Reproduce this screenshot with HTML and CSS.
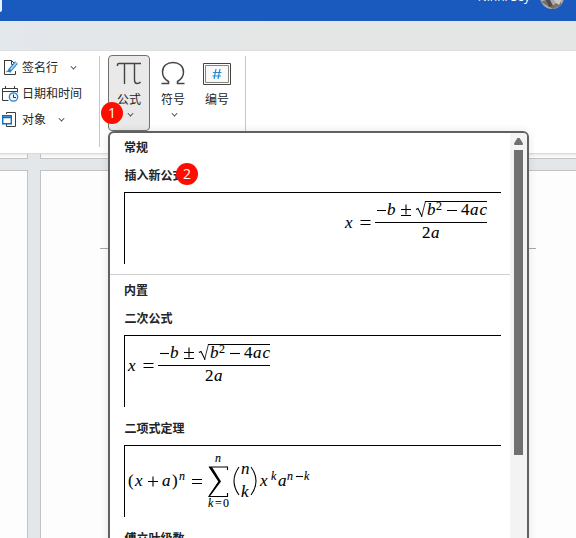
FILE: index.html
```html
<!DOCTYPE html>
<html lang="zh-CN">
<head>
<meta charset="utf-8">
<title>公式</title>
<link rel="stylesheet" href="styles.css">
</head>
<body>
<svg class="defs" width="0" height="0">
  <defs>
    <g id="quadratic">
      <text class="m" x="4" y="37" textLength="9">x</text>
      <path class="ln" d="M19.5 29.5h10M19.5 33.5h10"/>
      <path class="bar" d="M34 31.5h112"/>
      <path class="ln" d="M36 19.5h9"/>
      <text class="m" x="46" y="24">b</text>
      <path class="ln" d="M60 18.5h10M65 13.500v10M60 24.500h10"/>
      <path class="ln" d="M75 18.500l2-1 4 8"/><path class="ln thin" d="M80.500 26l4-16"/><path class="bar" d="M84 10.500h62"/>
      <text class="m" x="86" y="24">b</text>
      <text class="r s" x="95" y="19">2</text>
      <path class="ln" d="M106 19.500h10"/>
      <text class="r" x="120" y="24">4</text>
      <text class="m" x="129" y="24" textLength="17">ac</text>
      <text class="r" x="81" y="47">2</text>
      <text class="m" x="90" y="47">a</text>
    </g>
  </defs>
</svg>
<div class="app">
  <header class="titlebar"><span class="tab-edge"></span><span class="user">Ninni Sey</span>
    <svg class="avatar" width="24" height="24"><circle cx="12" cy="12" r="12" fill="#aaa8a6"/><path d="M1 17l7-3 4 7 8-5 2 4-9 4z" fill="#77706c"/><path d="M5 13l5 2 3 6-4 1z" fill="#4d4b4b"/><path d="M13 13l9 1-3 6-4-3z" fill="#cbc8c5"/></svg>
  </header>
  <div class="tabs"></div>
  <section class="ribbon">
    <div class="small-group">
      <div class="row"><svg width="17" height="17"><path d="M2.500 1.500h7l4 4M9.500 1.500v4h3M2.500 1v14.500h11V12" fill="none" stroke="#3c3c3c"/><path d="M14.500 3.500L8 11l-1 2" stroke="#2085cc" stroke-width="3.600" fill="none"/><path d="M14.500 3.500L8.500 10.500" stroke="#b9dcf5" stroke-width="1.500"/><path d="M4 13q2.500-2 3 0" fill="none" stroke="#2085cc"/></svg><span>签名行</span><i class="chev"></i></div>
      <div class="row"><svg width="17" height="17"><path d="M6.500 15.500H.5V3.500h15v4M.5 6.500h15M3.500 1v3M12.500 1v3" fill="none" stroke="#3c3c3c"/><circle cx="11.500" cy="12" r="4.200" fill="#eef7fd" stroke="#2085cc" stroke-width="1.300"/><path d="M11.500 9.500v3h2.500" fill="none" stroke="#333"/></svg><span>日期和时间</span></div>
      <div class="row"><svg width="17" height="17"><path d="M4.500 3V1.500h9v14h-9V13" fill="none" stroke="#3c3c3c"/><path d="M.7 4.700h8.600v8H.7zM.7 6.500h8.600" fill="#fff" stroke="#0f6cbd" stroke-width="1.400"/></svg><span>对象</span><i class="chev"></i></div>
    </div>
    <div class="big-group">
      <div class="tool active"><svg width="26" height="26"><path d="M1.500 6V4.500q0-1 1.500-1h22M8.500 4v20M18.500 4v16q0 3.500 2.500 3.500 2.500 0 3.500-1.500" fill="none" stroke="#444" stroke-width="1.400"/></svg><span>公式</span><i class="chev"></i></div>
      <div class="tool"><svg width="26" height="26"><path d="M1.500 23.500h7v-2C4 19 2.500 15.500 2.500 12 2.500 6 7 2.500 13 2.500S23.500 6 23.500 12c0 3.500-1.500 7-6 9.500v2h7" fill="none" stroke="#444" stroke-width="1.500"/></svg><span>符号</span><i class="chev"></i></div>
      <div class="tool"><svg width="28" height="26"><path d="M.5 3.500h27v21H.5z" fill="#fff" stroke="#444"/><path d="M2.500 5.500h23v17h-23z" fill="#fafafa" stroke="#85857c"/><path d="M13 9l-2 10M17 9l-2 10M10 12.500h8.500M9.500 16h8.500" stroke="#2788d0" stroke-width="1.200"/></svg><span>编号</span></div>
    </div>
  </section>
  <main class="workspace">
    <div class="col left"><div class="page-end"></div><div class="page"></div></div>
    <div class="col right"><div class="page-end"></div><div class="page"><div class="rule"></div></div></div>
  </main>
  <div class="gallery">
    <div class="list">
      <h2>常规</h2>
      <h3>插入新公式</h3>
      <div class="eq"><svg width="376" height="71"><use href="#quadratic" x="216" y="-2"/></svg></div>
      <hr>
      <h2 class="builtin">内置</h2>
      <h3>二次公式</h3>
      <div class="eq"><svg width="376" height="71"><use href="#quadratic" x="-1" y="-2"/></svg></div>
      <h3 class="next">二项式定理</h3>
      <div class="eq"><svg width="376" height="71"><g transform="translate(-1 -1)">
        <text class="r" x="4" y="41" textLength="6">(</text><text class="m" x="11" y="41" textLength="9">x</text>
        <path class="ln" d="M24 36.500h10M29 31.500v10"/>
        <text class="m" x="38" y="41" textLength="9">a</text><text class="r" x="48" y="41" textLength="6">)</text>
        <text class="m s" x="55" y="35" textLength="8">n</text>
        <path class="ln" d="M68 34.500h10M68 38.500h10"/>
        <path class="ln" d="M103.500 25v-3H85.500L95 36.500 85 51.500h18.500V48"/><path d="M85 22h3l9 14.500-10.500 14-1.500 0 9.500-14z"/>
        <text class="m s" x="91" y="17" textLength="7">n</text><text class="m s" x="84" y="62">k</text><text class="r s" x="91" y="62" textLength="14">=0</text>
        <path class="ln" d="M115 22q-10 14 0 28M127 22q10 14 0 28"/>
        <text class="m" x="117" y="29" textLength="9">n</text><text class="m" x="117" y="52">k</text>
        <text class="m" x="136" y="41" textLength="9">x</text><text class="m s" x="147" y="35">k</text>
        <text class="m" x="154" y="41" textLength="9">a</text><text class="m s" x="163" y="35" textLength="7">n</text><path class="ln" d="M172 31.500h7"/><text class="m s" x="180" y="35">k</text>
      </g></svg></div>
      <h3 class="next">傅立叶级数</h3>
    </div>
    <div class="scroll"><div class="up"></div><div class="thumb"></div></div>
  </div>
  <b class="badge one">1</b>
  <b class="badge two">2</b>
</div>
</body>
</html>
```
FILE: styles.css
```css
* { box-sizing: border-box; }
body { margin: 0; font: 12px/16px "Noto Sans CJK SC", sans-serif; color: #242424; }
.defs { display: block; }
.app { position: relative; width: 576px; height: 538px; overflow: hidden; display: flex; flex-direction: column; background: #fff; }
.titlebar { height: 21px; flex: none; background: #1a5abe; display: flex; justify-content: flex-end; color: #fff; overflow: hidden; }
.tab-edge { width: 2px; height: 12px; margin-right: auto; background: #e8f0fa; border-radius: 0 0 2px 0; }
.user { font: 12px/16px "Open Sans", sans-serif; margin: -11px 10px 0 0; }
.avatar { margin: -15px 12px 0 0; flex: none; }
.tabs { height: 30px; flex: none; background: linear-gradient(90deg, #e3e8ec, #e4e6e5 50%); border-bottom: 1px solid #dcdedf; }
.ribbon { height: 103px; flex: none; display: flex; background: #fff; border-bottom: 1px solid #dadada; }
.small-group { width: 100px; height: 91px; margin-top: 5px; border-right: 1px solid #c8c8c8; padding-left: 3px; display: flex; flex-direction: column; }
.row { height: 26px; display: flex; align-items: center; margin-top: -2px; margin-bottom: 2px; white-space: nowrap; }
.row svg { margin-right: 3px; margin-left: -1px; flex: none; }
.row span { margin-top: -1px; }
.chev { width: 5px; height: 5px; border: solid #333; border-width: 0 1.2px 1.2px 0; transform: rotate(45deg) scale(.85); }
.row .chev { margin-left: 13px; margin-top: -2px; }
.big-group { width: 146px; height: 91px; margin-top: 5px; border-right: 1px solid #c8c8c8; display: flex; padding-left: 8px; }
.tool { width: 44px; height: 76px; padding-top: 5px; display: flex; flex-direction: column; align-items: center; margin-top: -1px; }
.tool:not(.active) { position: relative; left: -1px; }
.tool.active { width: 42px; margin-right: 2px; border: 1px solid #707070; border-radius: 4px; background: #e9e9e9; padding-top: 4px; }
.tool svg { flex: none; }
.tool span { margin-top: 5px; }
.tool .chev { margin: 4px 0 0 2px; }
.workspace { flex: 1; display: flex; gap: 12px; background: #e3e7e9; }
.col { display: flex; flex-direction: column; gap: 11px; }
.left { width: 28px; }
.right { flex: 1; }
.page-end { height: 5px; background: linear-gradient(#ececec, #fff); border: solid #c0c2c3; border-width: 0 1px 1px; }
.page { flex: 1; background: #fdfdfd; border: solid #c0c2c3; border-width: 1px 1px 0; }
.left > div { border-left: 0; }
.right > div { border-right: 0; }
.rule { width: 436px; height: 1px; background: #a8a8a8; margin: 77px 0 0 59px; }
.gallery { position: absolute; left: 108px; top: 131px; width: 421px; height: 430px; border: 2px solid #616161; border-radius: 6px; background: #fff; display: flex; overflow: hidden; box-shadow: 0 0 10px #00000018; }
.list { width: 400px; }
h2, h3 { margin: 0; font-size: 12px; line-height: 16px; font-weight: 700; }
h2 { padding: 6px 0 0 14px; }
h2.builtin { padding-top: 7px; }
h3 { padding: 12px 0 0 14.500px; }
h3.next { padding-top: 13px; }
.eq { margin: 9px 9px 0 14px; height: 72px; border: solid #000; border-width: 1px 0 0 1px; }
.eq svg { display: block; }
hr { border: 0; height: 1px; margin: 10px 0 0; background: #d0d0d0; }
.scroll { width: 17px; background: #f3f3f3; padding: 5px 4px; }
.up { width: 9px; height: 7px; background: #707070; clip-path: polygon(38% 0, 62% 0, 100% 80%, 95% 100%, 5% 100%, 0 80%); }
.thumb { width: 9px; height: 305px; margin-top: 5px; background: #707070; }
.m { font: italic 17px "Liberation Serif", serif; stroke: #000; stroke-width: .1px; }
.r { font: 17px "Liberation Serif", serif; stroke: #000; stroke-width: .1px; }
.s { font-size: 12px; }
.ln { fill: none; stroke: #000; stroke-width: 1.100; }
.thin { stroke-width: .8; }
.bar { stroke: #000; stroke-width: 1; }
.badge { position: absolute; width: 22px; height: 22px; border-radius: 50%; background: #fe0c00; color: #fff; font: 14px/22px "Open Sans", sans-serif; text-align: center; }
.one { left: 101px; top: 102px; }
.two { left: 176px; top: 163px; }
```
